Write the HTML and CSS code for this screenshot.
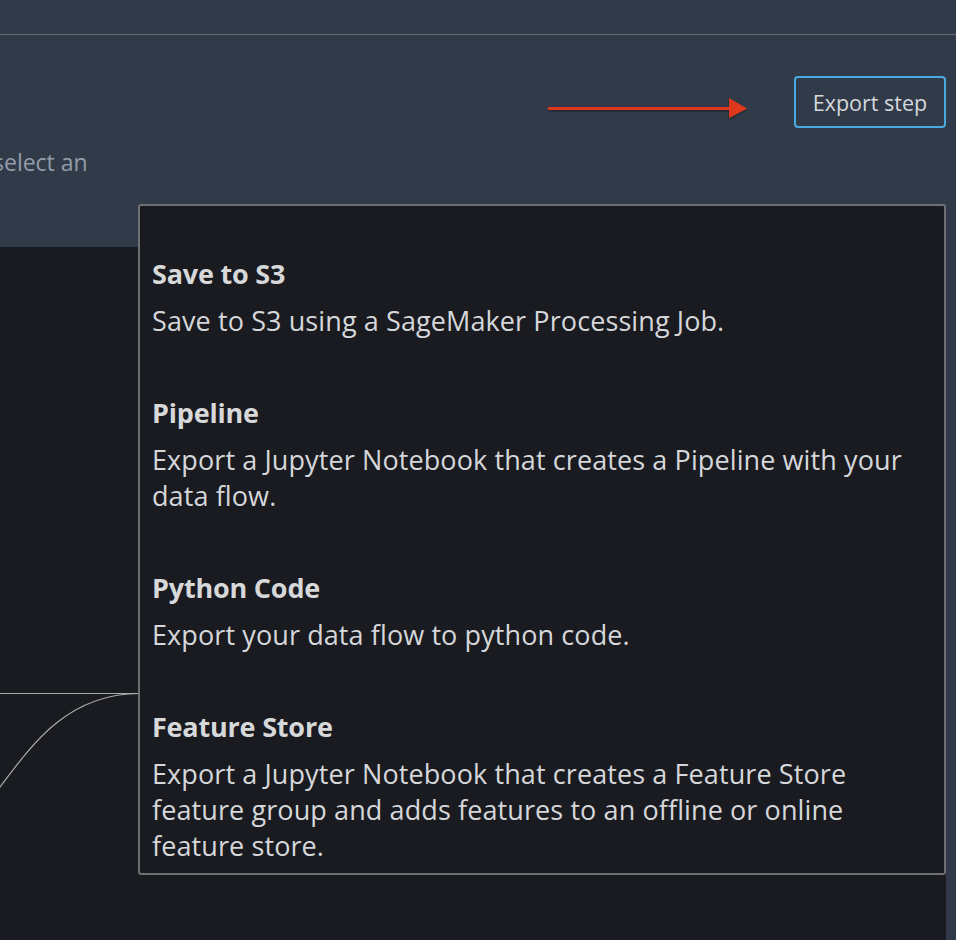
FILE: index.html
```html
<!DOCTYPE html>
<html lang="en">
<head>
<meta charset="utf-8">
<title>Export step</title>
<link rel="stylesheet" href="styles.css">
</head>
<body>
<div class="page">
  <div class="topbar"></div>
  <div class="header">
    <div class="actions">
      <button class="btn-export" type="button">Export step</button>
    </div>
    <p class="hint">select an</p>
  </div>
  <div class="canvas">
    <svg class="edges" width="946" height="693" viewBox="0 247 946 693" aria-hidden="true">
      <line x1="0" y1="693.5" x2="140" y2="693.5" class="edge"/>
      <path d="M -138 880 C 0 880, 0 693.5, 140 693.5" class="edge"/>
    </svg>
  </div>

  <svg class="annotation" width="210" height="30" viewBox="0 0 210 30" aria-hidden="true">
    <defs>
      <filter id="sh" x="-10%" y="-50%" width="120%" height="200%">
        <feDropShadow dx="0" dy="1" stdDeviation="1" flood-color="#000" flood-opacity="0.5"/>
      </filter>
    </defs>
    <g filter="url(#sh)">
      <line x1="1" y1="14.5" x2="184" y2="14.5" stroke="#e0391d" stroke-width="3" stroke-linecap="round"/>
      <path d="M181 4 L199 14.5 L181 24 Z" fill="#e0391d"/>
    </g>
  </svg>

  <div class="menu" role="menu">
    <div class="menu-item" role="menuitem">
      <div class="item-title">Save to S3</div>
      <div class="item-desc">Save to S3 using a SageMaker Processing Job.</div>
    </div>
    <div class="menu-item" role="menuitem">
      <div class="item-title">Pipeline</div>
      <div class="item-desc">Export a Jupyter Notebook that creates a Pipeline with your data flow.</div>
    </div>
    <div class="menu-item" role="menuitem">
      <div class="item-title">Python Code</div>
      <div class="item-desc">Export your data flow to python code.</div>
    </div>
    <div class="menu-item" role="menuitem">
      <div class="item-title">Feature Store</div>
      <div class="item-desc">Export a Jupyter Notebook that creates a Feature Store feature group and adds features to an offline or online feature store.</div>
    </div>
  </div>
</div>
</body>
</html>
```

FILE: styles.css
```css
* { box-sizing: border-box; }

html, body {
  margin: 0;
  padding: 0;
  background: #313a49;
  height: 100%;
  overflow: hidden;
}

body {
  font-family: "Open Sans", Roboto, "Liberation Sans", sans-serif;
  color: #d5d7da;
}

.page {
  position: relative;
  width: 956px;
  height: 940px;
  display: flex;
  flex-direction: column;
  background: #313a49;
}

.topbar {
  height: 35px;
  flex: none;
  border-bottom: 1px solid #656b74;
}

.header {
  height: 212px;
  flex: none;
  padding: 41px 10px 0 0;
  display: flex;
  flex-direction: column;
}

.actions {
  display: flex;
  justify-content: flex-end;
}

.btn-export {
  width: 152px;
  height: 52px;
  border: 2px solid #4aa9de;
  border-radius: 4px;
  background: transparent;
  color: #d5d8dc;
  font-family: inherit;
  font-size: 21.5px;
  padding: 0;
  cursor: pointer;
}

.hint {
  margin: 20px 0 0 -7px;
  font-size: 23px;
  line-height: 28px;
  color: #939ca8;
}

.canvas {
  flex: 1;
  margin-right: 10px;
  background: #1a1b20;
  position: relative;
  overflow: hidden;
}

.edges {
  position: absolute;
  left: 0;
  top: 0;
}

.edge {
  fill: none;
  stroke: #a9abaf;
  stroke-width: 1.2;
}

.annotation {
  position: absolute;
  left: 548px;
  top: 94px;
}

.menu {
  position: absolute;
  left: 138px;
  top: 204px;
  width: 808px;
  height: 671px;
  background: #1a1b20;
  border: 2px solid #6f7072;
  border-radius: 3px;
  padding: 50px 17px 10px 12px;
  display: flex;
  flex-direction: column;
  gap: 56px;
}

.menu-item {
  display: flex;
  flex-direction: column;
  gap: 11px;
}

.item-title {
  font-size: 27px;
  line-height: 36px;
  font-weight: 700;
  color: #d7d8da;
  letter-spacing: -0.2px;
}

.item-desc {
  font-size: 27px;
  line-height: 36px;
  color: #d5d7da;
  letter-spacing: 0.1px;
}
```
